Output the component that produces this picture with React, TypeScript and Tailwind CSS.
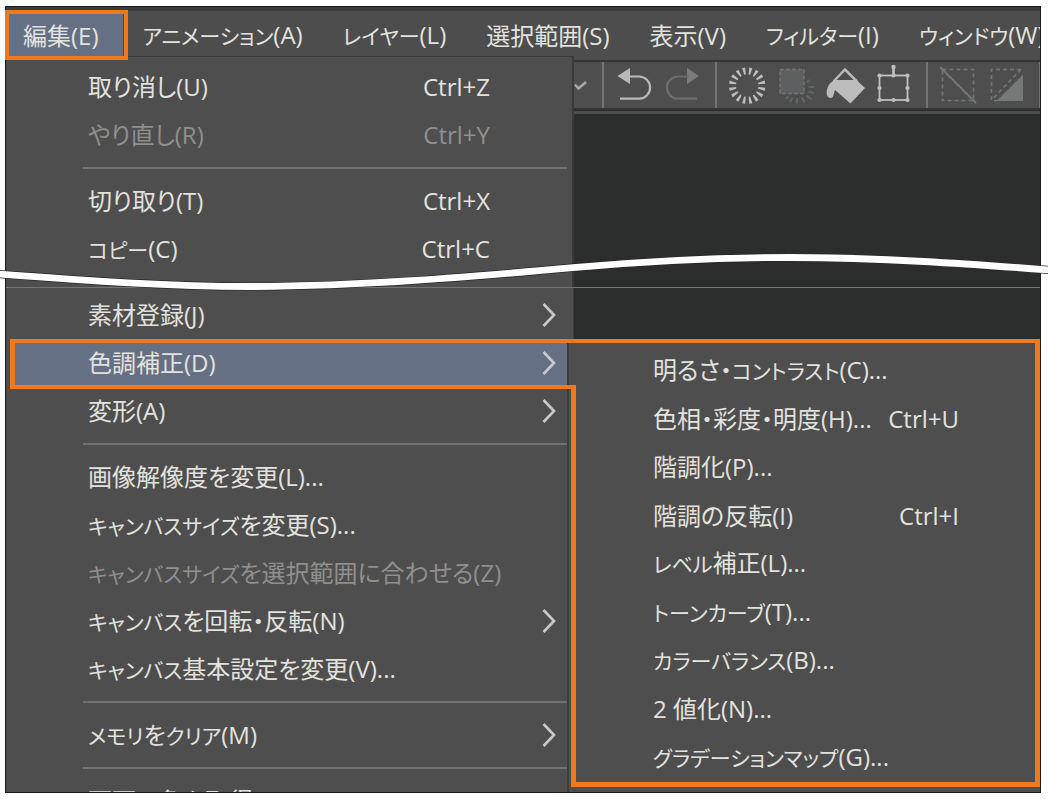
import type { ReactNode } from "react";
import clsx from "clsx";

type MenuEntry = {
  label: string;
  shortcut?: string;
  disabled?: boolean;
  submenu?: boolean;
  active?: boolean;
};

const menuBar = [
  "編集(E)",
  "アニメーション(A)",
  "レイヤー(L)",
  "選択範囲(S)",
  "表示(V)",
  "フィルター(I)",
  "ウィンドウ(W)",
];

const editTop: MenuEntry[][] = [
  [
    { label: "取り消し(U)", shortcut: "Ctrl+Z" },
    { label: "やり直し(R)", shortcut: "Ctrl+Y", disabled: true },
  ],
  [
    { label: "切り取り(T)", shortcut: "Ctrl+X" },
    { label: "コピー(C)", shortcut: "Ctrl+C" },
  ],
];

const editBottom: MenuEntry[][] = [
  [
    { label: "素材登録(J)", submenu: true },
    { label: "色調補正(D)", submenu: true, active: true },
    { label: "変形(A)", submenu: true },
  ],
  [
    { label: "画像解像度を変更(L)..." },
    { label: "キャンバスサイズを変更(S)..." },
    { label: "キャンバスサイズを選択範囲に合わせる(Z)", disabled: true },
    { label: "キャンバスを回転・反転(N)", submenu: true },
    { label: "キャンバス基本設定を変更(V)..." },
  ],
  [{ label: "メモリをクリア(M)", submenu: true }],
  [{ label: "画面の色を取得(W)" }],
];

const toneMenu: MenuEntry[] = [
  { label: "明るさ・コントラスト(C)..." },
  { label: "色相・彩度・明度(H)...", shortcut: "Ctrl+U" },
  { label: "階調化(P)..." },
  { label: "階調の反転(I)", shortcut: "Ctrl+I" },
  { label: "レベル補正(L)..." },
  { label: "トーンカーブ(T)..." },
  { label: "カラーバランス(B)..." },
  { label: "2 値化(N)..." },
  { label: "グラデーションマップ(G)..." },
];

// katakana is set a little smaller than the kanji around it
function Label({ text }: { text: string }) {
  return (
    <>
      {text.split(/([ァ-ヺー]+)/).map((part, i) =>
        i % 2 === 1 ? (
          <span key={i} className="text-[21px]">
            {part}
          </span>
        ) : (
          part
        )
      )}
    </>
  );
}

function MenuRow({ item }: { item: MenuEntry }) {
  return (
    <button
      disabled={item.disabled}
      className={clsx(
        "flex h-12 items-center text-left",
        item.disabled ? "text-[#8f8f8d]" : "text-[#e2e2de]",
        item.active ? "ml-1 bg-[#667085] pl-[78px]" : "pl-[82px]"
      )}
    >
      <span className="flex-1 whitespace-nowrap">
        <Label text={item.label} />
      </span>
      {item.shortcut && <span className="mr-[77px]">{item.shortcut}</span>}
      {item.submenu && (
        <svg className="mr-[11px]" width="14" height="24" viewBox="0 0 14 24" fill="none">
          <path d="M1.5 1 12 12 1.5 23" stroke="#c9c9c7" strokeWidth="2.6" />
        </svg>
      )}
    </button>
  );
}

function MenuGroups({ groups }: { groups: MenuEntry[][] }) {
  return (
    <>
      {groups.map((group, i) => (
        <div key={i} className="flex flex-col">
          {i > 0 && <hr className="my-2 ml-[77px] h-[2px] border-0 bg-[#707271]" />}
          {group.map((item) => (
            <MenuRow key={item.label} item={item} />
          ))}
        </div>
      ))}
    </>
  );
}

function ToolButton({ label, children }: { label: string; children: ReactNode }) {
  return (
    <button aria-label={label} className="flex w-[49px] shrink-0 justify-center">
      <svg width="48" height="48" viewBox="0 0 48 48" fill="none">
        {children}
      </svg>
    </button>
  );
}

function Divider() {
  return <span className="mr-[5px] ml-2 h-12 w-[2px] shrink-0 bg-[#737373]" />;
}

const rays = Array.from({ length: 16 }, (_, i) => 11.25 + i * 22.5);
const handles = [
  [9.5, 14.5],
  [23.5, 14.5],
  [37.5, 14.5],
  [9.5, 27],
  [37.5, 27],
  [9.5, 39],
  [23.5, 39],
  [37.5, 39],
];

function Toolbar() {
  return (
    <div className="flex h-[50px] shrink-0 items-center overflow-hidden border-y-2 border-[#343636] bg-[#4e4e4e]">
      <button aria-label="More" className="w-5 shrink-0">
        <svg width="20" height="48" viewBox="0 0 20 48" fill="none">
          <path d="M1 23.5 4.5 27.5 12 21" stroke="#a9a9a9" strokeWidth="2.4" />
        </svg>
      </button>
      <Divider />
      <ToolButton label="Undo">
        <path d="M7.5 15 20 7v16Z" fill="#b9b9b9" />
        <path d="M18 15.5h11a11 11 0 0 1 0 22.2H10" stroke="#b9b9b9" strokeWidth="2.2" />
      </ToolButton>
      <ToolButton label="Redo">
        <path d="M40 15 28 7v16Z" fill="#7b7c7c" />
        <path d="M30 15.5H19a11 11 0 0 0 0 22.2h19" stroke="#6c6d6d" strokeWidth="2.2" />
      </ToolButton>
      <Divider />
      <ToolButton label="Clear">
        {rays.map((deg) => (
          <path
            key={deg}
            d="M22.600 6.500h3.200l-.8 7h-1.600Z"
            fill="#bdbdbd"
            transform={`rotate(${deg} 24.200 24.700)`}
          />
        ))}
      </ToolButton>
      <ToolButton label="Clear outside selection">
        <rect x="8" y="8.5" width="24" height="24" fill="#5d6060" stroke="#727474" strokeWidth="1.5" strokeDasharray="4 2" />
        <path
          d="M35 21l3-2M36.500 26h5.500M36.500 30.500l5.500 1.500M34.500 34.500l5 4M30 36.500l2.500 5M25 37v5.500M20.500 36.500l-2.500 4.500M16.500 35.500l-2.500 2"
          stroke="#666969"
          strokeWidth="1.800"
        />
      </ToolButton>
      <ToolButton label="Fill">
        <path d="M12.500 20.500 24 8.500 36 20.500" stroke="#b9b9b9" strokeWidth="2.5" />
        <path d="M14.500 19h21l8.500 8-14.500 15.500L14 29c-1.500 3-1 8-4.500 8-4 0-4.500-6-3-10 1.200-4 4-6.500 8-8Z" fill="#bcbcbc" />
      </ToolButton>
      <ToolButton label="Transform">
        <rect x="9.500" y="14.500" width="28" height="24.500" stroke="#c0c0c0" strokeWidth="1.800" />
        <path d="M23.500 5v10" stroke="#c0c0c0" strokeWidth="2.600" />
        <circle cx="23.500" cy="6" r="2.200" fill="#c0c0c0" />
        {handles.map(([x, y]) => (
          <circle key={`${x}-${y}`} cx={x} cy={y} r="2.100" fill="#c0c0c0" />
        ))}
      </ToolButton>
      <Divider />
      <ToolButton label="Deselect">
        <rect x="8.500" y="8.500" width="31" height="31" stroke="#747776" strokeWidth="1.600" strokeDasharray="4 3" />
        <path d="m6 6 36 36" stroke="#747776" strokeWidth="2" />
      </ToolButton>
      <ToolButton label="Invert selection">
        <path d="M38 8.500H8.500v31H14M38 8.500 9 38.500" stroke="#747776" strokeWidth="1.600" strokeDasharray="4 3" />
        <path d="M40 13.500v26.500H13.500Z" fill="#757877" />
      </ToolButton>
      <Divider />
    </div>
  );
}

export default function App() {
  return (
    <main className="relative min-h-screen overflow-hidden bg-white pt-1.5 font-['Open_Sans','Noto_Sans_CJK_JP',sans-serif] text-[24px] leading-8 [font-feature-settings:'palt']">
      <div className="relative mr-[7px] ml-[5px] border border-[#1f1a19] bg-[#2c2e2d]">
        <section className="flex h-[280px] flex-col overflow-hidden">
          <nav className="flex h-[53px] shrink-0 items-center overflow-hidden border-t-4 border-[#3a3b3b] bg-[#4d4d4d] text-[#e2e2de]">
            {menuBar.map((name, i) => (
              <button
                key={name}
                className={clsx(
                  "h-full shrink-0 whitespace-nowrap",
                  i === 0 ? "bg-[#667085] pr-6 pl-[17px]" : "px-5"
                )}
              >
                <Label text={name} />
              </button>
            ))}
          </nav>
          <div className="flex min-h-0 flex-1">
            <div className="z-10 -mt-1 w-[568px] shrink-0 border-t border-r-2 border-[#383a3a] bg-[#4f4e4e] pt-1.5 pr-[5px]">
              <MenuGroups groups={editTop} />
            </div>
            <div className="flex min-w-0 flex-1 flex-col">
              <Toolbar />
              <div className="mt-px h-[3px] bg-[#4b4c4c]" />
            </div>
          </div>
        </section>

        <section className="relative flex h-[505px] overflow-hidden border-t border-[#737674]">
          <div className="w-[568px] shrink-0 border-r border-[#3c3e3e] bg-[#4f4e4e] pt-[3px] pr-1.5">
            <MenuGroups groups={editBottom} />
          </div>
          <div className="z-10 -ml-[7px] flex min-w-0 flex-1 flex-col pt-[51px]">
            <div className="relative flex-1 border-l-2 border-[#3a3b3b] bg-[#4e4e4e] pb-[5px] pl-[2px]">
              <div className="grid h-full auto-rows-fr border-t-4 border-r-[5px] border-b-[5px] border-[#ee7a1d] pt-[3px] pl-[82px]">
                {toneMenu.map((item) => (
                  <button key={item.label} className="flex items-center text-left whitespace-nowrap text-[#e2e2de]">
                    <span className="min-w-[224px]">
                      <Label text={item.label} />
                    </span>
                    {item.shortcut && <span className="w-[82px] text-right">{item.shortcut}</span>}
                  </button>
                ))}
              </div>
              <span className="absolute top-[46px] bottom-[5px] left-[2px] w-[5px] bg-[#ee7a1d]" />
            </div>
          </div>
          <span className="absolute top-[51px] left-1 z-20 h-[50px] w-[565px] border-y-4 border-l-[5px] border-[#ee7a1d]" />
        </section>

        <span className="absolute top-[3px] -left-px z-20 h-[50px] w-[123px] border-4 border-[#ee7a1d]" />
      </div>

      {/* torn edge between the two halves of the menu */}
      <svg
        className="absolute top-[240px] left-0 z-30 h-[60px] w-full"
        viewBox="0 0 1048 60"
        preserveAspectRatio="none"
        fill="none"
      >
        <path d="M-2 34C90 41 170 46.500 250 46.500C360 46.500 473 36.700 573 27.700C650 20.800 720 17.500 790 17.500C880 17.500 970 24 1050 30" stroke="#2a2726" strokeWidth="8.200" />
        <path d="M-2 34C90 41 170 46.500 250 46.500C360 46.500 473 36.700 573 27.700C650 20.800 720 17.500 790 17.500C880 17.500 970 24 1050 30" stroke="#ffffff" strokeWidth="6.800" />
      </svg>
    </main>
  );
}
